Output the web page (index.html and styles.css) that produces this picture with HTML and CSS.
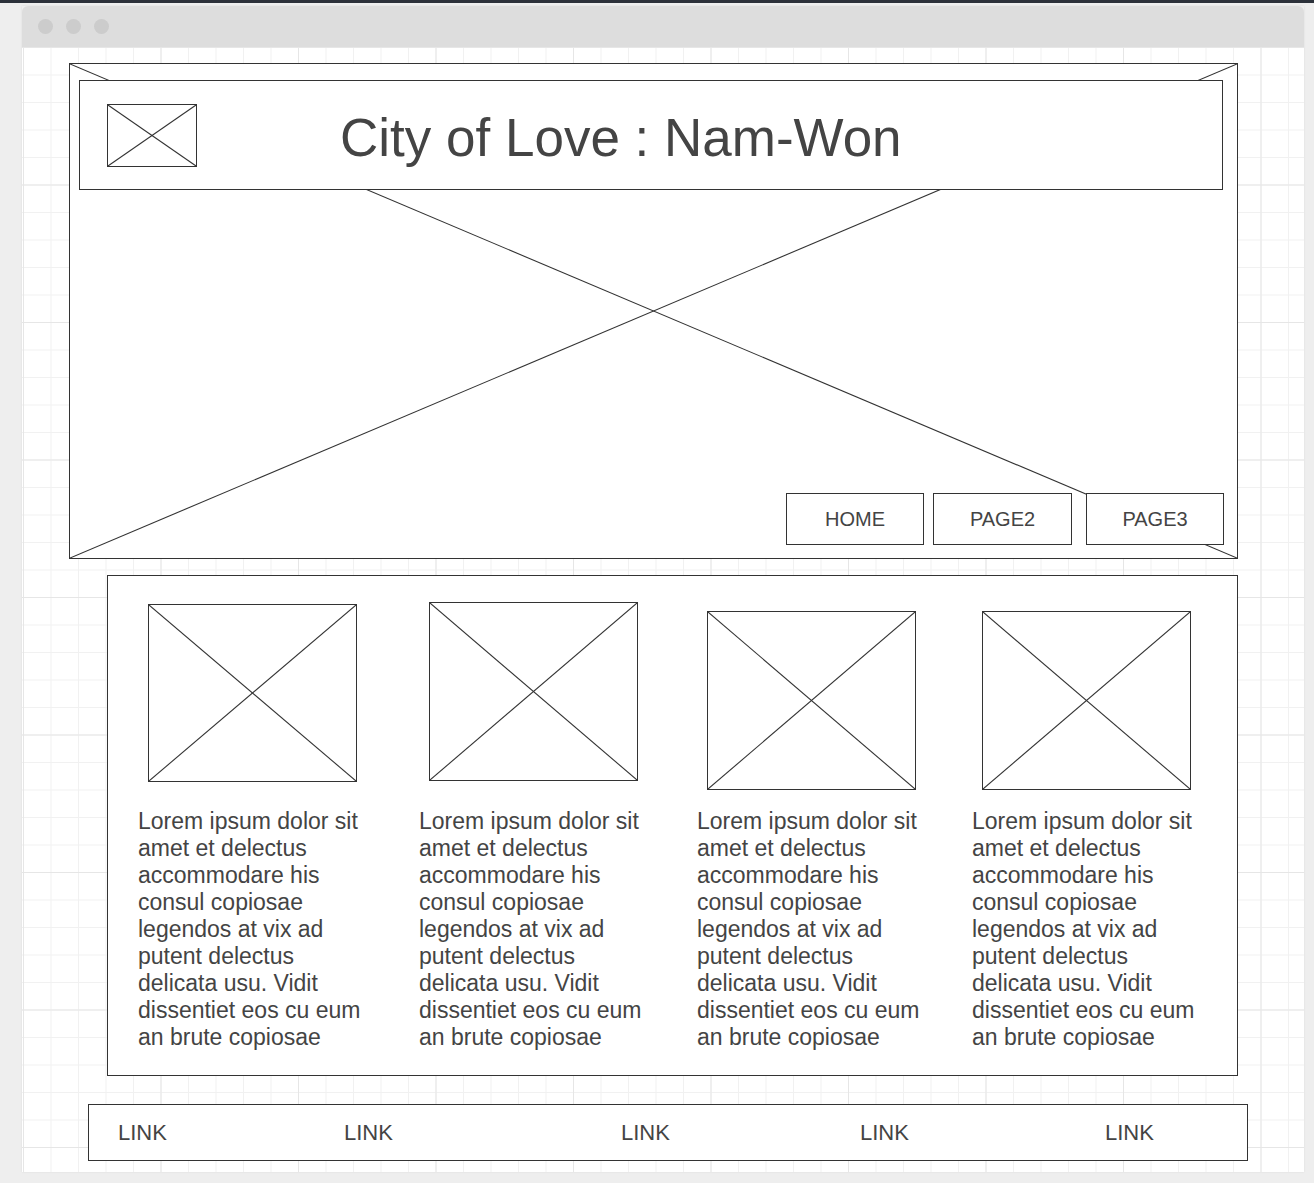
FILE: index.html
```html
<!DOCTYPE html>
<html lang="en">
<head>
<meta charset="utf-8">
<title>City of Love : Nam-Won — wireframe</title>
<link rel="stylesheet" href="styles.css">
</head>
<body>
<div class="topbar"></div>
<div class="window">
  <div class="titlebar">
    <span class="dot"></span><span class="dot"></span><span class="dot"></span>
  </div>
  <div class="canvas">
    <section class="hero">
      <svg class="hero-cross" viewBox="0 0 100 100" preserveAspectRatio="none" aria-hidden="true">
        <line x1="0" y1="0" x2="100" y2="100"/>
        <line x1="100" y1="0" x2="0" y2="100"/>
      </svg>
      <header class="header">
        <div class="ph logo">
          <svg viewBox="0 0 100 100" preserveAspectRatio="none" aria-hidden="true"><line x1="0" y1="0" x2="100" y2="100"/><line x1="100" y1="0" x2="0" y2="100"/></svg>
        </div>
        <h1 class="title">City of Love : Nam-Won</h1>
      </header>
      <nav class="nav">
        <a class="btn btn-home">HOME</a>
        <a class="btn btn-page2">PAGE2</a>
        <a class="btn btn-page3">PAGE3</a>
      </nav>
    </section>

    <section class="content">
      <article class="col col-1">
        <div class="media"><div class="ph thumb"><svg viewBox="0 0 100 100" preserveAspectRatio="none" aria-hidden="true"><line x1="0" y1="0" x2="100" y2="100"/><line x1="100" y1="0" x2="0" y2="100"/></svg></div></div>
        <p class="text">Lorem ipsum dolor sit amet et delectus accommodare his consul copiosae legendos at vix ad putent delectus delicata usu. Vidit dissentiet eos cu eum an brute copiosae</p>
      </article>
      <article class="col col-2">
        <div class="media"><div class="ph thumb"><svg viewBox="0 0 100 100" preserveAspectRatio="none" aria-hidden="true"><line x1="0" y1="0" x2="100" y2="100"/><line x1="100" y1="0" x2="0" y2="100"/></svg></div></div>
        <p class="text">Lorem ipsum dolor sit amet et delectus accommodare his consul copiosae legendos at vix ad putent delectus delicata usu. Vidit dissentiet eos cu eum an brute copiosae</p>
      </article>
      <article class="col col-3">
        <div class="media"><div class="ph thumb"><svg viewBox="0 0 100 100" preserveAspectRatio="none" aria-hidden="true"><line x1="0" y1="0" x2="100" y2="100"/><line x1="100" y1="0" x2="0" y2="100"/></svg></div></div>
        <p class="text">Lorem ipsum dolor sit amet et delectus accommodare his consul copiosae legendos at vix ad putent delectus delicata usu. Vidit dissentiet eos cu eum an brute copiosae</p>
      </article>
      <article class="col col-4">
        <div class="media"><div class="ph thumb"><svg viewBox="0 0 100 100" preserveAspectRatio="none" aria-hidden="true"><line x1="0" y1="0" x2="100" y2="100"/><line x1="100" y1="0" x2="0" y2="100"/></svg></div></div>
        <p class="text">Lorem ipsum dolor sit amet et delectus accommodare his consul copiosae legendos at vix ad putent delectus delicata usu. Vidit dissentiet eos cu eum an brute copiosae</p>
      </article>
    </section>

    <footer class="footer">
      <a class="link">LINK</a>
      <a class="link">LINK</a>
      <a class="link">LINK</a>
      <a class="link">LINK</a>
      <a class="link">LINK</a>
    </footer>
  </div>
</div>
</body>
</html>
```

FILE: styles.css
```css
* { box-sizing: border-box; }

html, body {
  margin: 0;
  padding: 0;
}

body {
  background: #eeeeee;
  font-family: "Liberation Sans", Arial, sans-serif;
  color: #444444;
  width: 1314px;
  height: 1183px;
  overflow: hidden;
}

.topbar {
  height: 3px;
  background: #2c313a;
}

.window {
  margin: 3px 0 0 22px;
  width: 1282px;
  box-shadow: 0 0 2px rgba(0, 0, 0, 0.08);
}

.titlebar {
  height: 41px;
  background: #dddddd;
  border-radius: 6px 6px 0 0;
  display: flex;
  align-items: center;
  gap: 13px;
  padding-left: 16px;
}

.dot {
  width: 15px;
  height: 15px;
  border-radius: 50%;
  background: #cccccc;
}

.canvas {
  height: 1125px;
  padding: 16px 0 0 2px;
  background-color: #ffffff;
  background-image:
    linear-gradient(to right, #e6e6e6 1px, transparent 1px),
    linear-gradient(to bottom, #e6e6e6 1px, transparent 1px),
    linear-gradient(to right, #f1f1f1 1px, transparent 1px),
    linear-gradient(to bottom, #f1f1f1 1px, transparent 1px);
  background-size: 137.5px 137.5px, 137.5px 137.5px, 27.5px 27.5px, 27.5px 27.5px;
  background-position: 1px 0;
}

/* placeholders */
.ph {
  border: 1px solid #333333;
  background: #ffffff;
}

.ph svg {
  display: block;
  width: 100%;
  height: 100%;
}

svg line {
  stroke: #333333;
  stroke-width: 1.1;
  vector-effect: non-scaling-stroke;
}

/* hero */
.hero {
  position: relative;
  margin-left: 45px;
  width: 1169px;
  height: 496px;
  border: 1px solid #333333;
  background: #ffffff;
  padding: 16px 14px 13px 9px;
  display: flex;
  flex-direction: column;
  justify-content: space-between;
}

.hero-cross {
  position: absolute;
  inset: 0;
  width: 100%;
  height: 100%;
}

.header {
  position: relative;
  height: 110px;
  border: 1px solid #333333;
  background: #ffffff;
  display: flex;
  align-items: center;
  padding-left: 27px;
}

.logo {
  width: 90px;
  height: 63px;
  flex: none;
}

.title {
  margin: 0 0 0 143px;
  padding-top: 6px;
  font-size: 53px;
  font-weight: normal;
  color: #444444;
  line-height: 1.15;
}

.nav {
  position: relative;
  display: flex;
  justify-content: flex-end;
  margin-right: -1px;
}

.btn {
  height: 52px;
  border: 1px solid #333333;
  background: #ffffff;
  display: flex;
  align-items: center;
  justify-content: center;
  font-size: 20px;
  color: #444444;
}

.btn-home { width: 138px; }
.btn-page2 { width: 139px; margin-left: 9px; }
.btn-page3 { width: 138px; margin-left: 14px; }

/* content */
.content {
  margin: 16px 0 0 83px;
  width: 1131px;
  height: 501px;
  border: 1px solid #333333;
  background: #ffffff;
  display: grid;
  grid-template-columns: 281px 278px 275px 1fr;
  padding-left: 30px;
}

.media {
  height: 232px;
  padding-left: 10px;
}

.col-1 .media { padding-top: 28px; }
.col-2 .media { padding-top: 26px; }
.col-3 .media { padding-top: 35px; }
.col-4 .media { padding-top: 35px; }

.thumb {
  width: 209px;
  height: 179px;
}

.col-1 .thumb { height: 178px; }

.text {
  margin: 0;
  max-width: 236px;
  font-size: 23px;
  line-height: 27px;
  color: #444444;
}

/* footer */
.footer {
  margin: 28px 0 0 64px;
  width: 1160px;
  height: 57px;
  border: 1px solid #333333;
  background: #ffffff;
  display: grid;
  grid-template-columns: 226px 277px 239px 245px 1fr;
  align-items: center;
  padding-left: 29px;
}

.link {
  font-size: 22px;
  color: #444444;
}
```
